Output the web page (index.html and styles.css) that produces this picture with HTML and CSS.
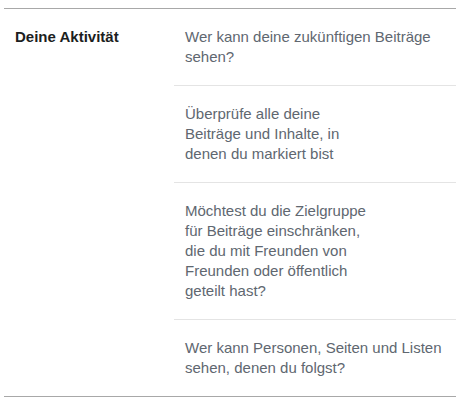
FILE: index.html
```html
<!DOCTYPE html>
<html lang="de">
<head>
<meta charset="utf-8">
<link rel="stylesheet" href="styles.css">
</head>
<body>
<section class="panel">
  <h2 class="panel-title">Deine Aktivität</h2>
  <ul class="items">
    <li class="item">Wer kann deine zukünftigen Beiträge<br>sehen?</li>
    <li class="item">Überprüfe alle deine<br>Beiträge und Inhalte, in<br>denen du markiert bist</li>
    <li class="item">Möchtest du die Zielgruppe<br>für Beiträge einschränken,<br>die du mit Freunden von<br>Freunden oder öffentlich<br>geteilt hast?</li>
    <li class="item">Wer kann Personen, Seiten und Listen<br>sehen, denen du folgst?</li>
  </ul>
</section>
</body>
</html>
```

FILE: styles.css
```css
html, body {
  margin: 0;
  padding: 0;
  background: #ffffff;
}

body {
  font-family: "Liberation Sans", Arial, sans-serif;
  font-size: 15px;
  line-height: 20px;
}

.panel {
  display: flex;
  margin: 8px 1px 0 4px;
  border-top: 1px solid #a8a8a8;
  border-bottom: 1px solid #a8a8a8;
}

.panel-title {
  flex: 0 0 170px;
  margin: 0;
  padding: 18px 0 0 11px;
  box-sizing: border-box;
  font-size: 15px;
  line-height: 20px;
  font-weight: 700;
  color: #1c1e21;
}

.items {
  flex: 1;
  margin: 0;
  padding: 0;
  list-style: none;
}

.item {
  padding: 18px 0 18px 11px;
  color: #606770;
  border-top: 1px solid #e4e4e4;
}

.item:first-child {
  border-top: none;
}
```
